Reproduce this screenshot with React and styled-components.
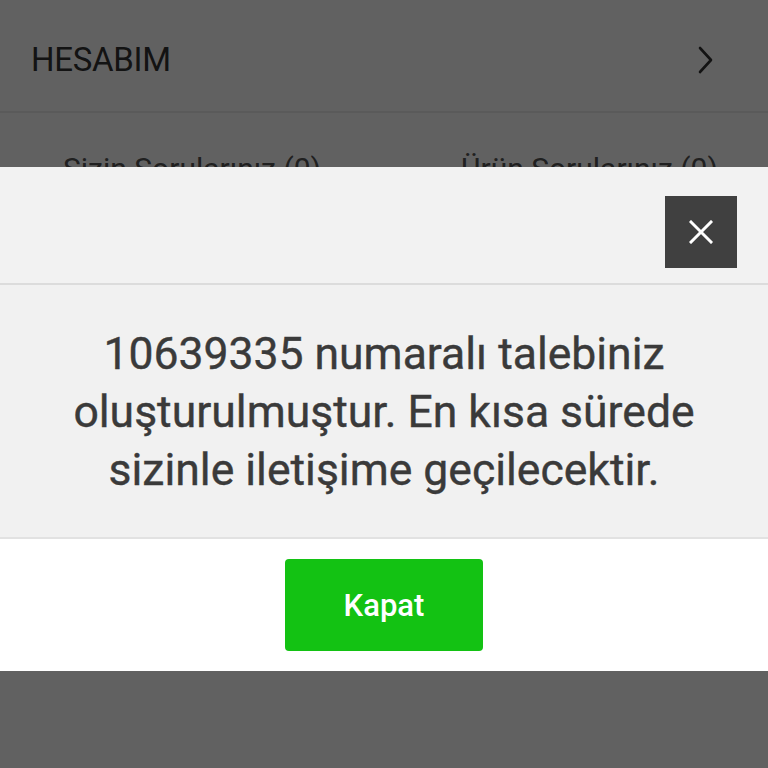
import React from "react";
import styled, { createGlobalStyle } from "styled-components";

const Global = createGlobalStyle`
  html, body { margin: 0; padding: 0; }
  body {
    font-family: Roboto, "Noto Sans", Arial, sans-serif;
    background: #ffffff;
  }
`;

function Chevron() {
  return (
    <svg width="20" height="28" viewBox="0 0 20 28" fill="none">
      <path d="M4 2 L15 14 L4 26" stroke="#333" strokeWidth="2.6" strokeLinecap="round" strokeLinejoin="round" />
    </svg>
  );
}

function CloseIcon() {
  return (
    <svg width="24" height="24" viewBox="0 0 24 24">
      <path d="M2 2 L22 22 M22 2 L2 22" stroke="#fff" strokeWidth="3" strokeLinecap="square" />
    </svg>
  );
}

export default function App() {
  return (
    <Page>
      <Global />
      <AccountRow>
        <AccountTitle>HESABIM</AccountTitle>
        <Chevron />
      </AccountRow>
      <TabsRow>
        <Tab>Sizin Sorularınız (0)</Tab>
        <Tab>Ürün Sorularınız (0)</Tab>
      </TabsRow>

      <Overlay>
        <Modal>
          <ModalHeader>
            <CloseButton aria-label="Kapat">
              <CloseIcon />
            </CloseButton>
          </ModalHeader>
          <ModalBody>
            10639335 numaralı talebiniz oluşturulmuştur. En kısa sürede
            sizinle iletişime geçilecektir.
          </ModalBody>
          <ModalFooter>
            <PrimaryButton>Kapat</PrimaryButton>
          </ModalFooter>
        </Modal>
      </Overlay>
    </Page>
  );
}

const Page = styled.div`
  width: 768px;
  height: 768px;
  overflow: hidden;
  background: #fff;
  position: relative;
`;

const AccountRow = styled.div`
  height: 113px;
  display: flex;
  align-items: center;
  justify-content: space-between;
  padding: 8px 52px 0 31px;
  border-bottom: 2px solid #ececec;
  box-sizing: border-box;
`;

const AccountTitle = styled.h2`
  margin: 0;
  font-size: 33px;
  font-weight: 400;
  color: #333;
  letter-spacing: -0.3px;
`;

const TabsRow = styled.div`
  display: flex;
  padding: 38px 0 0 63px;
  gap: 140px;
`;

const Tab = styled.div`
  font-size: 30px;
  color: #555;
`;

const Overlay = styled.div`
  position: absolute;
  inset: 0;
  background: rgba(0, 0, 0, 0.62);
  padding-top: 167px;
`;

const Modal = styled.div`
  background: #fff;
  display: flex;
  flex-direction: column;
`;

const ModalHeader = styled.div`
  height: 118px;
  background: #f2f2f2;
  border-bottom: 2px solid #dcdcdc;
  display: flex;
  align-items: flex-start;
  justify-content: flex-end;
  padding: 29px 31px 0 0;
  box-sizing: border-box;
`;

const CloseButton = styled.button`
  width: 72px;
  height: 72px;
  border: none;
  background: #404040;
  display: flex;
  align-items: center;
  justify-content: center;
  padding: 0;
`;

const ModalBody = styled.p`
  margin: 0;
  background: #f1f1f1;
  border-bottom: 2px solid #e2e2e2;
  padding: 40px 30px 38px;
  text-align: center;
  font-size: 44.5px;
  font-weight: 400;
  line-height: 58px;
  color: #3a3a3a;
  -webkit-text-stroke: 0.4px #3a3a3a;
`;

const ModalFooter = styled.div`
  height: 132px;
  background: #fff;
  display: flex;
  align-items: center;
  justify-content: center;
`;

const PrimaryButton = styled.button`
  width: 198px;
  height: 92px;
  border: none;
  border-radius: 4px;
  background: #13c213;
  color: #fff;
  font-family: Roboto, Arial, sans-serif;
  font-size: 31px;
  font-weight: 500;
`;
